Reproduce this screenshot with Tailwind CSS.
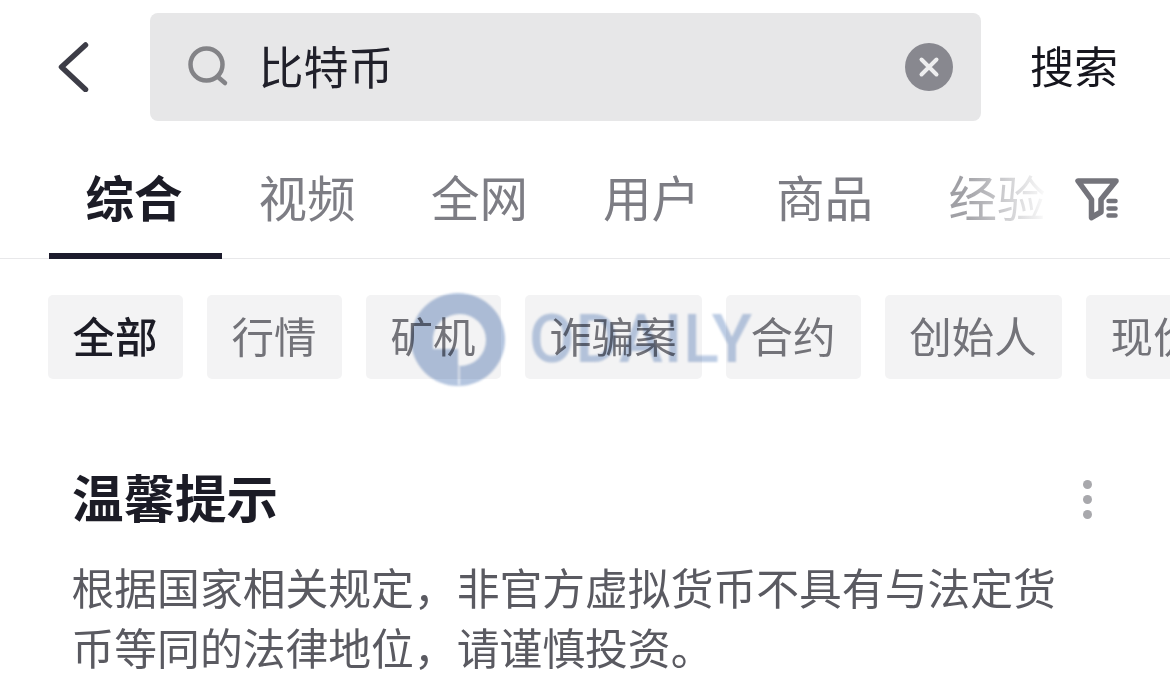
<!DOCTYPE html>
<html lang="zh-CN">
<head>
  <meta charset="UTF-8" />
  <title>搜索</title>
  <script src="https://cdn.jsdelivr.net/npm/@tailwindcss/browser@4"></script>
</head>
<body class="bg-white overflow-hidden font-['Noto_Sans_CJK_SC',sans-serif]">
  <div class="relative w-[1170px] h-[681px] overflow-hidden">
    <!-- Search bar -->
    <div class="flex items-center h-[108px] mt-[13px]">
      <div class="w-[150px] pl-[58px] shrink-0">
        <svg width="32" height="50" viewBox="0 0 32 50" fill="none" stroke="#3d3d47" stroke-width="5.5" stroke-linecap="round" stroke-linejoin="round"><path d="M27.5 3 L3.5 25 L27.5 47.5" /></svg>
      </div>
      <div class="w-[831px] h-[108px] bg-[#e7e7e8] rounded-lg flex items-center pl-[37px] pr-[28px] shrink-0">
        <svg width="42" height="42" viewBox="0 0 42 42" fill="none" stroke="#838387" stroke-width="4.5" stroke-linecap="round"><circle cx="19.5" cy="18.5" r="16" /><path d="M31 31 L38 37" /></svg>
        <span class="ml-[29.5px] pb-1 text-[45px] leading-none text-[#20202a]">比特币</span>
        <span class="ml-auto -mt-px w-12 h-12 rounded-full bg-[#88888f] flex items-center justify-center">
          <svg width="24" height="24" viewBox="0 0 24 24" stroke="#eeeeef" stroke-width="4" stroke-linecap="round"><path d="M4.5 4.5 L19.5 19.5 M19.5 4.5 L4.5 19.5" /></svg>
        </span>
      </div>
      <span class="ml-[49px] pb-1 text-[44px] leading-none text-[#16161e]">搜索</span>
    </div>

    <!-- Tabs -->
    <div class="relative flex items-start h-[138px] pl-[49px] border-b border-[#e8e8ea]">
      <div class="w-[173px] h-[138px] border-b-[6px] border-[#1c1b2c] flex justify-center pt-[51px] shrink-0">
        <span class="mr-[3px] text-[48.5px] leading-none font-bold text-[#1c1c26]">综合</span>
      </div>
      <div class="w-[173px] flex justify-center pt-[51px] shrink-0"><span class="mr-[3px] text-[48.5px] leading-none text-[#7d7d84]">视频</span></div>
      <div class="w-[172px] flex justify-center pt-[51px] shrink-0"><span class="mr-[3px] text-[48.5px] leading-none text-[#7d7d84]">全网</span></div>
      <div class="w-[172px] flex justify-center pt-[51px] shrink-0"><span class="mr-[3px] text-[48.5px] leading-none text-[#7d7d84]">用户</span></div>
      <div class="w-[174px] flex justify-center pt-[51px] shrink-0"><span class="mr-[3px] text-[48.5px] leading-none text-[#7d7d84]">商品</span></div>
      <div class="w-[173px] flex justify-center pt-[51px] shrink-0"><span class="mr-[5px] text-[48.5px] leading-none text-transparent bg-clip-text bg-linear-to-r from-[#a0a0a5] from-15% to-[#fbfbfb] to-100%">经验</span></div>
      <div class="absolute left-[1050px] top-0 w-[120px] h-[136px] bg-white"></div>
      <svg class="absolute left-[1075px] top-[57px]" width="44" height="44" viewBox="0 0 44 44" fill="none">
        <path d="M3 3 H41 L26 21.5 V34 L16.5 39.5 V21.5 Z" stroke="#74747b" stroke-width="5.5" stroke-linejoin="round" />
        <path d="M33.5 23 H40.5 M33.5 30.5 H40.5 M33.5 37.5 H40.5" stroke="#74747b" stroke-width="4.5" stroke-linecap="round" />
      </svg>
    </div>

    <!-- Filter chips -->
    <div class="flex gap-6 pl-[48px] mt-[36px] w-[1300px]">
      <div class="w-[135px] h-[84px] pb-[3px] pr-px rounded-[5px] bg-[#f3f3f4] flex items-center justify-center text-[42.5px] leading-none font-medium text-[#1c1c26] shrink-0">全部</div>
      <div class="w-[135px] h-[84px] pb-[3px] pr-px rounded-[5px] bg-[#f3f3f4] flex items-center justify-center text-[42.5px] leading-none text-[#737379] shrink-0">行情</div>
      <div class="w-[135px] h-[84px] pb-[3px] pr-px rounded-[5px] bg-[#f3f3f4] flex items-center justify-center text-[42.5px] leading-none text-[#737379] shrink-0">矿机</div>
      <div class="w-[177px] h-[84px] pb-[3px] pr-px rounded-[5px] bg-[#f3f3f4] flex items-center justify-center text-[42.5px] leading-none text-[#737379] shrink-0">诈骗案</div>
      <div class="w-[135px] h-[84px] pb-[3px] pr-px rounded-[5px] bg-[#f3f3f4] flex items-center justify-center text-[42.5px] leading-none text-[#737379] shrink-0">合约</div>
      <div class="w-[177px] h-[84px] pb-[3px] pr-px rounded-[5px] bg-[#f3f3f4] flex items-center justify-center text-[42.5px] leading-none text-[#737379] shrink-0">创始人</div>
      <div class="w-[135px] h-[84px] pb-[3px] pr-px rounded-[5px] bg-[#f3f3f4] flex items-center justify-center text-[42.5px] leading-none text-[#737379] shrink-0">现价</div>
    </div>

    <!-- Notice -->
    <div class="flex items-start justify-between pl-[72px] pr-[78px] mt-[86px]">
      <h2 class="text-[51.5px] leading-[62px] font-bold text-[#1c1c26]">温馨提示</h2>
      <div class="flex flex-col gap-[6px] pt-[14.5px]">
        <span class="w-[9px] h-[9px] rounded-full bg-[#a8a8ac]"></span>
        <span class="w-[9px] h-[9px] rounded-full bg-[#a8a8ac]"></span>
        <span class="w-[9px] h-[9px] rounded-full bg-[#a8a8ac]"></span>
      </div>
    </div>
    <p class="pl-[71.5px] w-[1090px] mt-[29px] text-[42.8px] leading-[60px] text-[#5a5a61]">根据国家相关规定，非官方虚拟货币不具有与法定货<br />币等同的法律地位，请谨慎投资。</p>

    <!-- Watermark -->
    <svg class="absolute left-[411px] top-[293px] mix-blend-multiply blur-[1px] pointer-events-none" width="94" height="93" viewBox="0 0 94 93">
      <path fill-rule="evenodd" fill="#b4c5df" d="M47 0 A47 46.5 0 1 1 47 93 A47 46.5 0 1 1 47 0 Z M49 21 A26 26 0 0 1 49 73 H47 V56 H22 V44 A27 25 0 0 1 49 21 Z" />
      <path d="M48 72 V92" stroke="#e4eaf4" stroke-width="2" />
    </svg>
    <div class="absolute left-[529px] top-[304px] text-[66px] leading-[72px] tracking-[1px] font-['Roboto',sans-serif] font-medium text-[#bccce4] mix-blend-multiply blur-[1px] pointer-events-none">ODAILY</div>
  </div>
</body>
</html>
